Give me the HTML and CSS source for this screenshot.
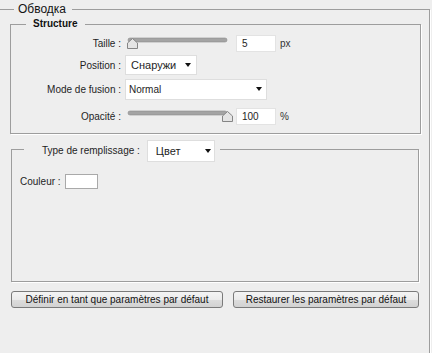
FILE: index.html
```html
<!DOCTYPE html>
<html lang="fr">
<head>
  <meta charset="UTF-8" />
  <title>Обводка</title>
  <link rel="stylesheet" href="styles.css">
</head>
<body>
  <fieldset class="group">
    <legend class="group-title">Обводка</legend>

    <fieldset class="box structure">
      <legend class="box-title">Structure</legend>
      <div class="row row-size">
        <span class="row-label">Taille :</span>
        <svg class="slider" width="110" height="12" viewBox="0 0 110 12">
          <rect x="3" y="1" width="99" height="4" rx="2" fill="#a4a4a4" stroke="#8c8c8c" stroke-width="0.6"/>
          <path d="M2.5 11.5 V6 L7.5 1.5 L12.5 6 V11.5 Z" fill="#e4e4e4" stroke="#858585"/>
        </svg>
        <div class="field">5</div>
        <span class="unit">px</span>
      </div>
      <div class="row row-pos">
        <span class="row-label">Position :</span>
        <div class="select select-pos"><span class="cyr">Снаружи</span><span class="arrow"></span></div>
      </div>
      <div class="row row-mode">
        <span class="row-label">Mode de fusion :</span>
        <div class="select select-mode"><span>Normal</span><span class="arrow"></span></div>
      </div>
      <div class="row row-opacity">
        <span class="row-label">Opacité :</span>
        <svg class="slider" width="110" height="12" viewBox="0 0 110 12">
          <rect x="3" y="1" width="99" height="4" rx="2" fill="#a4a4a4" stroke="#8c8c8c" stroke-width="0.6"/>
          <path d="M97.5 11.5 V6 L102.5 1.5 L107.5 6 V11.5 Z" fill="#e4e4e4" stroke="#858585"/>
        </svg>
        <div class="field">100</div>
        <span class="unit">%</span>
      </div>
    </fieldset>

    <fieldset class="box fill">
      <legend class="fill-legend">
        <span class="fill-label">Type de remplissage :</span>
        <div class="select select-fill"><span class="cyr">Цвет</span><span class="arrow"></span></div>
      </legend>
      <div class="fill-body">
        <span class="color-label">Couleur :</span>
        <span class="swatch"></span>
      </div>
    </fieldset>

    <div class="buttons">
      <button class="btn btn-set">Définir en tant que paramètres par défaut</button>
      <button class="btn btn-reset">Restaurer les paramètres par défaut</button>
    </div>
  </fieldset>
</body>
</html>
```

FILE: styles.css
```css
body {
  margin: 0;
  background: #eeeeee;
  font-family: "Liberation Sans", Arial, sans-serif;
  font-size: 10px;
  color: #1e1e1e;
  overflow: hidden;
}
fieldset {
  margin: 0;
  padding: 0;
  min-width: 0;
  border: 1px solid #9d9d9d;
  box-shadow: 1px 1px 0 #fff;
}
legend {
  padding: 0;
}
.group {
  margin: 0 2px 0 0;
  border-left: none;
  padding-bottom: 60px;
}
.group-title {
  margin-left: 14px;
  padding: 0 6px 0 4px;
  font-size: 12px;
  line-height: 18px;
  color: #141414;
}
.structure {
  margin: 0 8px 0 10px;
  padding-bottom: 7px;
}
.box-title {
  margin-left: 15px;
  padding: 0 8px 0 7px;
  font-weight: bold;
  line-height: 12px;
  color: #111;
}
.row {
  display: flex;
  align-items: center;
  height: 20px;
}
.row-size { margin-top: 3px; }
.row-pos { margin-top: 1px; height: 22px; }
.row-mode { margin-top: 2px; height: 22px; }
.row-opacity { margin-top: 6px; }
.row-label {
  width: 110px;
  margin-right: 4px;
  text-align: right;
}
.slider {
  display: block;
}
.field {
  box-sizing: border-box;
  width: 40px;
  height: 17px;
  margin-left: 1px;
  padding-left: 5px;
  background: #fff;
  border: 1px solid #e3e3e3;
  line-height: 15px;
}
.unit {
  margin-left: 4px;
  color: #333;
}
.select {
  box-sizing: border-box;
  display: flex;
  align-items: center;
  justify-content: space-between;
  background: #fff;
  border: 1px solid #dedede;
}
.select .cyr {
  font-size: 11px;
}
.arrow {
  width: 0;
  height: 0;
  border-left: 3.5px solid transparent;
  border-right: 3.5px solid transparent;
  border-top: 4px solid #111;
}
.select-pos {
  width: 72px;
  height: 20px;
  padding: 0 5px 0 5px;
}
.select-mode {
  width: 142px;
  height: 21px;
  padding: 0 4px 0 3px;
}
.fill {
  margin: 6px 10px 0 11px;
}
.fill-legend {
  display: flex;
  align-items: flex-start;
  height: 18px;
  margin-left: 12px;
  padding: 0 5px 0 18px;
}
.fill-label {
  margin-right: 7px;
  line-height: 22px;
}
.select-fill {
  width: 68px;
  height: 22px;
  margin-bottom: -4px;
  padding: 0 3px 0 8px;
}
.fill-body {
  box-sizing: border-box;
  display: flex;
  align-items: center;
  height: 123px;
  padding: 0 8px 77px;
}
.color-label {
  margin-right: 4px;
}
.swatch {
  box-sizing: border-box;
  width: 33px;
  height: 15px;
  background: #fff;
  border: 1px solid #a9a9a9;
}
.buttons {
  display: flex;
  gap: 10px;
  margin-top: 9px;
  padding-left: 11px;
}
.btn {
  height: 17px;
  padding: 0;
  border: 1px solid #7a7a7a;
  border-radius: 3px;
  background: linear-gradient(#f4f4f4 0%, #ebebeb 50%, #dddddd 51%, #d2d2d2 100%);
  font-family: "Liberation Sans", Arial, sans-serif;
  font-size: 10px;
  color: #111;
  line-height: 15px;
}
.btn-set { width: 212px; }
.btn-reset { width: 186px; }
```
